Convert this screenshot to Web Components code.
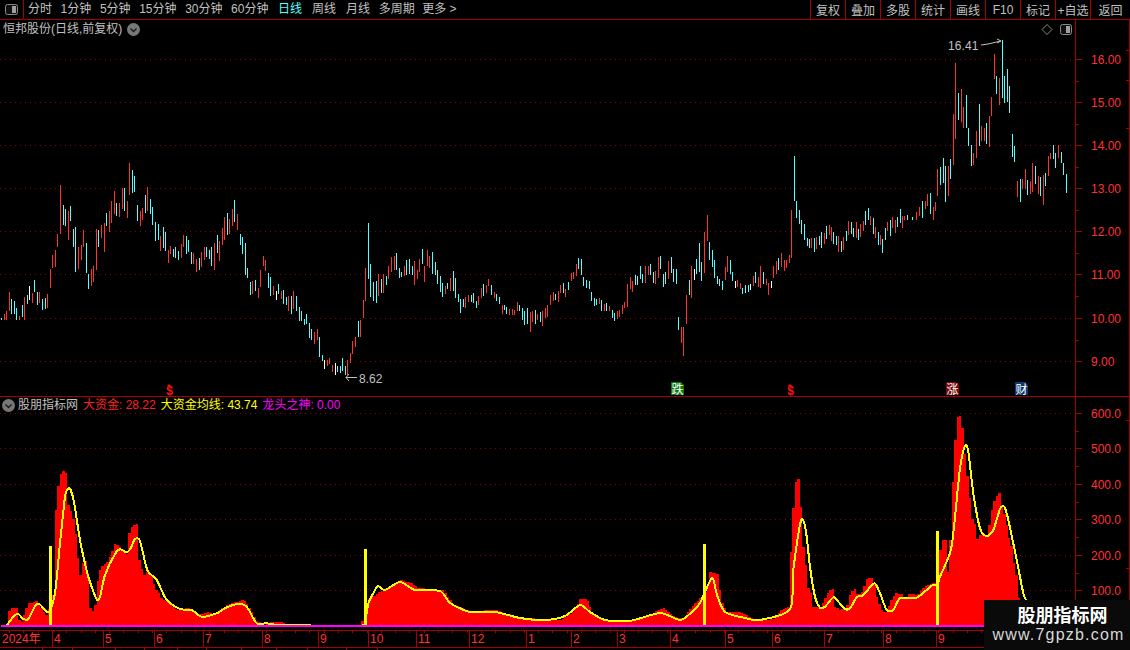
<!DOCTYPE html>
<html lang="zh">
<head>
<meta charset="utf-8">
<title>恒邦股份</title>
<style>
  html, body { margin: 0; background: #000; overflow: hidden; }
  #app {
    position: relative;
    width: 1130px;
    height: 650px;
    overflow: hidden;
    display: flex;
    flex-direction: column;
    font: 12px "Liberation Sans", "Noto Sans CJK SC", sans-serif;
    color: #c0c0c0;
  }
</style>
</head>
<body>
<div id="app">
  <tdx-toolbar>
    <tool-item>分时</tool-item>
    <tool-item>1分钟</tool-item>
    <tool-item>5分钟</tool-item>
    <tool-item>15分钟</tool-item>
    <tool-item>30分钟</tool-item>
    <tool-item>60分钟</tool-item>
    <tool-item active style="margin-left:1px">日线</tool-item>
    <tool-item style="margin-left:1.4px">周线</tool-item>
    <tool-item style="margin-left:1.4px">月线</tool-item>
    <tool-item>多周期</tool-item>
    <tool-item style="margin-left:-1px">更多 &gt;</tool-item>
    <tool-cell slot="right">复权</tool-cell>
    <tool-cell slot="right">叠加</tool-cell>
    <tool-cell slot="right">多股</tool-cell>
    <tool-cell slot="right">统计</tool-cell>
    <tool-cell slot="right">画线</tool-cell>
    <tool-cell slot="right">F10</tool-cell>
    <tool-cell slot="right">标记</tool-cell>
    <tool-cell slot="right">+自选</tool-cell>
    <tool-cell slot="right" last>返回</tool-cell>
  </tdx-toolbar>
  <kline-chart>
    <span>恒邦股份(日线,前复权)</span>
    <signal-tag slot="tags" style="left:166px"></signal-tag>
    <signal-tag slot="tags" style="left:671px" kind="green">跌</signal-tag>
    <signal-tag slot="tags" style="left:787px"></signal-tag>
    <signal-tag slot="tags" style="left:946px" kind="red">涨</signal-tag>
    <signal-tag slot="tags" style="left:1015px" kind="blue">财</signal-tag>
  </kline-chart>
  <indicator-chart>
    <span style="color:#c0c0c0">股朋指标网</span>
    <span style="color:#ff2020">大资金: 28.22</span>
    <span style="color:#ffff00">大资金均线: 43.74</span>
    <span style="color:#ff00ff">龙头之神: 0.00</span>
  </indicator-chart>
  <time-axis></time-axis>
  <tab-strip></tab-strip>
  <water-mark></water-mark>
</div>

<script>
const LINE = '#a80000'
const DOTS = '#8c0000'
const FONT = '"Liberation Sans", "Noto Sans CJK SC", sans-serif'

// bars as read from the crops: colour, x, top, bottom in crop pixels (3x)
const BARS = [
  [0, 150, 'c4,503,510 r12,492,510 r18,483,510 r27,426,483 c33,447,491 c42,453,491 c48,474,510 r57,498,510 c66,465,500 r72,441,510 c81,435,462 w87,408,450 r96,429,459 c102,390,426 c111,426,465 r117,426,459 c126,447,480 c135,444,477 r141,432,474 r150,357,414 r156,315,354 r165,300,351 r171,252,291 r181,105,252 c189,165,225 c195,177,228 r205,183,270 c211,168,213 c220,237,291 c226,231,366 r235,291,357 r243,285,330 r249,240,291 c258,279,370 c265,372,417 r273,357,408 r279,348,396 r289,237,360 c295,240,291 r303,225,264 r312,219,306 c319,189,228 r327,183,246 r333,153,219 r342,123,192 c349,159,198 r357,159,201 r366,114,177 c373,114,183 r381,153,204 r388,39,135 c396,60,129 c403,78,126 c411,165,213 r420,183,228 r426,174,210 c435,135,189 r441,111,183 c450,147,192 c457,171,225 c465,216,273 c474,222,270 r480,258,303 c489,231,294 c495,246,303 r504,300,339 r511,288,312 c519,297,321 c526,291,324 c534,303,330 r543,282,324 r549,255,291 c558,258,312 c564,270,306 c573,306,342 r579,309,342 r589,327,366 c598,324,360 r604,306,351 r612,291,330 c618,291,321 c627,300,327 c634,291,348 r643,279,360 c651,255,309 r657,273,333 r666,234,285 r672,201,270 c681,189,255 r688,207,252 r696,177,228 c702,150,216 r711,192,240 c720,252,285 c726,261,312 c735,279,375 c741,354,384 c751,396,435 r757,393,432 c766,390,423 r775,414,444'],
  [260, 210, 'r1,180,231 r10,138,168 r16,150,183 c25,189,234 c31,201,258 r40,228,255 w49,243,270 c54,222,252 r64,243,267 c70,240,282 c79,261,285 r85,258,303 c94,258,312 r100,243,297 c109,258,303 c118,291,333 c124,303,333 c133,327,345 c139,312,342 c148,339,385 c154,357,390 r163,366,402 r171,357,390 c178,381,441 c186,435,453 w193,450,477 r201,450,468 r208,444,462 r217,465,486 w226,459,495 c232,468,487 c241,468,489 c247,444,483 c256,468,495 r262,450,495 r271,429,459 r277,393,432 r286,381,411 c295,333,381 r301,330,381 r310,270,324 r316,174,273 c325,39,207 c331,162,261 c340,216,273 c349,213,279 r355,192,258 c364,207,249 r370,192,249 c379,198,225 r385,168,207 r394,141,186 r403,138,180 c409,129,180 c418,174,204 c424,186,201 r433,168,198 c439,150,195 c448,147,192 c457,168,195 r463,153,225 r472,180,207 r478,147,186 c487,117,162 r493,168,216 r502,120,168 r508,138,174 c517,126,192 c526,156,195 c532,180,222 c541,198,246 c547,219,261 r556,228,252 c562,219,237 r571,204,243 c579,183,243 c586,204,264 c595,252,276 c601,267,309 c610,267,291 r616,261,294 r625,255,276 c634,255,276 c640,249,279 c649,273,294 r655,258,285 r664,234,264 c670,222,258 r679,225,249 r685,207,228 c694,225,255 r703,246,264 c709,252,273 c718,261,282 r725,285,312 c733,285,300 c739,291,312 r748,297,315 r757,297,315 r763,300,315 r772,276,303 c778,285,303'],
  [520, 150, 'c7,474,510 c13,483,525 c22,474,522 r31,486,546 r37,483,516 c46,480,522 r52,492,510 c61,486,516 r67,483,528 r76,474,504 r82,465,501 r91,435,465 r100,426,453 c106,432,450 r115,423,456 r121,405,429 c130,399,429 r136,417,441 c145,396,420 r154,369,393 r160,366,387 r169,342,378 c175,324,357 c184,327,375 c190,381,408 c199,390,414 c208,393,417 c214,426,453 c223,444,468 c229,447,465 r238,444,462 c244,450,483 r253,462,483 c259,459,483 r268,468,483 c277,480,504 c283,489,513 r292,483,507 r298,480,501 r307,465,492 r313,456,474 r322,402,471 r331,381,417 r337,393,426 c346,375,405 c352,378,405 c361,348,387 c367,372,399 r376,348,399 r385,348,375 c391,342,375 c400,366,399 r406,363,402 r415,321,384 c421,318,357 c430,372,411 c436,366,402 r445,333,387 c454,321,369 c460,357,396 c469,357,402 c475,501,540 r484,531,579 r490,531,618 r499,435,522 c508,390,435 r514,348,444 w523,357,390 c529,327,372 c538,279,366 c544,336,393 r553,246,369 r562,195,273 c568,276,330 c577,300,351 c583,330,384 c592,378,402 c598,387,408 c607,393,420 r616,351,390 r622,318,366 c631,330,372 c637,366,393 w646,393,414 r652,390,411 r661,399,417 c667,414,432 c676,405,429 c685,405,426 w691,402,420 r700,378,408 c706,366,399 r715,381,411 r721,348,414 c730,366,402 r739,387,405 r745,399,435 w754,393,414 r760,348,384 r769,333,372 c775,324,360 r784,309,351 r793,330,363 r799,330,354 r808,315,339 r814,180,324 c823,18,153 c829,153,204 c838,180,222 c844,210,252 c853,222,270 c862,264,288 c868,267,294'],
  [900, 30, 'r13,558,570 c22,555,570 c37,561,570 r49,546,570 r58,531,558 c67,513,564 r76,513,537 r82,492,528 c91,489,552 r100,531,570 r106,516,543 r112,417,498 c121,411,465 c130,384,459 c136,408,516 r145,408,498 c151,387,447 r160,252,405 r166,99,327 c175,189,270 r184,177,276 r190,231,294 c199,195,294 c205,294,348 c214,345,408 r220,369,405 r229,303,384 c238,222,348 r244,288,333 r253,294,333 c259,279,342 r268,258,351 r274,201,258 r283,72,147 c289,138,192 r298,144,225 c307,30,204 c313,138,219 c322,117,216 c328,168,249 c337,312,381 c343,348,396 r352,453,501 c361,447,516 r367,447,477 r376,417,477 c382,450,495 r391,453,492 r397,399,486 c406,408,462 r415,438,492 c421,441,498 r430,435,525 c436,429,468 r445,378,438 r451,369,387 c460,345,387 c466,369,414 r475,345,384 c484,366,399 c490,399,435 c499,432,489']
]

// stretch between the crops, read off the full picture: middle of each bar
const MIDS = [243,245,243,240,240,238,232,230,234,238,240,244,246,243,236,228,228,232,230,234,230,226,218,214,220,226,232,238,240,246,234,226,228,222,226,222,216,222]
const MID_LEN = [10, 14, 12, 9, 16, 11, 13]
const MID_COL = 'rcrccrcrrccrc'

function candlePaths () {
  const paths = { r: '', c: '', w: '' }
  const add = (col, x, top, bottom) => {
    paths[col] += `M${Math.round(x) + 0.5} ${Math.round(top)}V${Math.round(bottom)}`
  }
  for (const [ox, oy, text] of BARS) {
    for (const bar of text.split(' ')) {
      const [x, top, bottom] = bar.slice(1).split(',').map(Number)
      add(bar[0], ox + x / 3, oy + top / 3, oy + bottom / 3)
    }
  }
  MIDS.forEach((mid, i) => {
    const len = MID_LEN[i % MID_LEN.length]
    add(MID_COL[i % MID_COL.length], 811.4 + i * 2.45, mid - len / 2, mid + len / 2)
  })
  return paths
}

const fromCrop = (list, ox, oy) => list.map(([x, y]) => [ox + x / 3, oy + y / 3])

const RED_TOP = [
  ...fromCrop([[3,497],[20,497],[22,460],[30,445],[47,441],[48,475],[55,482],[65,490],[66,475],[75,450],[82,428],[95,428],[105,423],[110,430],[122,445],[132,465],[140,465],[145,430],[155,430],[158,400],[165,140],[175,50],[185,33],[195,40],[200,130],[210,155],[220,190],[230,280],[233,330],[240,350],[243,310],[255,300],[263,360],[268,452],[282,452],[283,400],[290,360],[298,325],[320,305],[335,270],[340,250],[350,255],[365,270],[380,285],[383,225],[393,200],[408,192],[408,280],[420,315],[426,350],[435,335],[450,340],[462,385],[475,400],[480,415],[500,425],[530,452],[560,442],[590,465],[620,457],[640,462],[665,445],[680,433],[715,423]], 0, 460),
  [243,600],[248,607],[255,620],[262,625],[270,622],[280,622],[290,625],[360,626],[362,618],[366,608],[367,600],[377,593],[384,590],
  [400,580],[410,583],[418,588],[442,590],[452,604],[470,611],[495,610],[510,615],[525,618],[560,620],[572,612],[580,598],[586,600],[592,614],[602,620],[632,620],[650,614],[662,608],[672,616],[682,619],[692,606],[700,597],[706,590],[708,572],[717,574],[720,600],[726,612],[740,612],[750,618],
  ...fromCrop([[0,630],[40,628],[60,600],[85,590],[88,455],[97,295],[105,210],[112,207],[115,290],[122,290],[125,400],[135,475],[140,535],[148,535],[150,585],[155,590],[180,590],[190,570],[205,540],[215,537],[218,590],[240,600],[258,590],[265,555],[280,535],[290,555],[305,545],[318,505],[335,505],[343,530],[345,555],[360,600],[375,610],[390,570],[405,550],[425,553],[430,565],[445,550],[470,555],[490,530],[510,520],[525,520],[537,425],[545,390],[555,390],[558,500],[565,450],[573,250],[580,115],[588,20],[598,18],[605,60],[610,120],[625,250],[632,325],[640,330],[645,398],[652,375],[680,375],[695,285],[705,260],[720,243],[722,290],[735,330],[740,375],[750,400],[758,455],[768,505],[770,560],[780,570]], 760, 410),
  [1017,600],[1018,626]
]

const YELLOW = [
  ...fromCrop([[20,497],[40,470],[55,462],[70,477],[85,477],[105,438],[118,432],[140,455],[150,452],[165,400],[180,250],[195,110],[205,85],[212,90],[222,125],[240,240],[265,350],[290,418],[300,410],[315,345],[345,282],[360,268],[380,277],[392,265],[405,237],[420,243],[442,330],[470,360],[500,420],[540,447],[575,450],[605,470],[650,460],[680,442],[715,432]], 0, 460),
  ...fromCrop([[740,50],[770,100],[800,100],[845,105],[1075,107],[1095,95],[1105,40],[1120,10]], 0, 590),
  [378,586],[385,590],[400,582],[415,590],[440,591],[450,603],[470,612],[495,612],[520,618],[545,620],[565,616],[580,605],[590,612],[605,620],[630,621],[660,613],[680,620],[692,612],[700,603],[712,578],[717,595],[725,612],[745,618],[760,620],
  ...fromCrop([[90,598],[100,480],[122,335],[132,337],[140,380],[150,470],[165,560],[180,593],[195,590],[220,562],[235,575],[255,597],[270,595],[290,562],[310,555],[343,520],[360,550],[380,600],[400,600],[420,565],[470,563],[515,527],[532,525],[540,500],[570,430],[580,370],[600,175],[615,107],[625,125],[640,250],[660,355],[680,378],[700,360],[720,297],[733,290],[745,330],[770,450],[790,550],[800,575]], 760, 410),
  [1028,610]
]

function stepArea (points, base) {
  let d = `M${points[0][0]} ${base}`
  let seg = 0
  for (let x = points[0][0]; x < points[points.length - 1][0]; x += 2.45) {
    while (seg < points.length - 2 && points[seg + 1][0] < x) seg++
    const [x0, y0] = points[seg]
    const [x1, y1] = points[seg + 1]
    const y = y0 + (y1 - y0) * (x - x0) / (x1 - x0 || 1)
    d += `V${Math.round(y)}H${Math.round(x + 2.45)}`
  }
  return d + `V${base}Z`
}

// catmull-rom through the read points, the reference line is a smooth average
function smoothLine (p) {
  let d = `M${p[0][0]} ${p[0][1]}`
  for (let i = 0; i < p.length - 1; i++) {
    const a = p[i - 1] || p[i]
    const b = p[i]
    const c = p[i + 1]
    const e = p[i + 2] || c
    const c1 = [b[0] + (c[0] - a[0]) / 8, b[1] + (c[1] - a[1]) / 8]
    const c2 = [c[0] - (e[0] - b[0]) / 8, c[1] - (e[1] - b[1]) / 8]
    d += `C${c1[0].toFixed(1)} ${c1[1].toFixed(1)} ${c2[0].toFixed(1)} ${c2[1].toFixed(1)} ${c[0].toFixed(1)} ${c[1].toFixed(1)}`
  }
  return d
}

// dotted grid, axis ticks and right-hand labels shared by both panels
function gridAndAxis (rows, fromY, toY) {
  let out = ''
  rows.forEach(([y, label], i) => {
    out += `<path d="M0 ${y + 0.5}H1075" stroke="${DOTS}" stroke-dasharray="1 4"/>`
    out += `<path d="M1075 ${y + 0.5}H1082" stroke="${LINE}"/>`
    out += `<text x="1091" y="${y + 4.5}" fill="#ff3232">${label}</text>`
    if (i < rows.length - 1) {
      const half = Math.round((y + rows[i + 1][0]) / 2)
      out += `<path d="M1075 ${half + 0.5}H1079" stroke="${LINE}"/>`
    }
  })
  out += `<path d="M1075.5 ${fromY}V${toY}" stroke="${LINE}"/>`
  return out
}

class TdxToolbar extends HTMLElement {
  constructor () {
    super()
    this.attachShadow({ mode: 'open' }).innerHTML = `
      <style>
        :host { display: flex; height: 19px; border-bottom: 1px solid ${LINE}; flex: none; align-items: stretch; }
        .menu { width: 23px; border-right: 1px solid ${LINE}; display: flex; align-items: center; justify-content: center; flex: none; }
        .items { display: flex; gap: 8.6px; padding-left: 4px; align-items: center; }
        .right { margin-left: auto; display: flex; }
      </style>
      <div class="menu">
        <svg width="13" height="11" viewBox="0 0 13 11">
          <rect x="0.5" y="0.5" width="12" height="10" rx="2" fill="#111" stroke="#8a8a8a"/>
          <rect x="7" y="2" width="4" height="7" fill="#a0a0a0"/>
        </svg>
      </div>
      <div class="items"><slot></slot></div>
      <div class="right"><slot name="right"></slot></div>`
  }
}
window.customElements.define('tdx-toolbar', TdxToolbar)

class ToolItem extends HTMLElement {
  constructor () {
    super()
    this.attachShadow({ mode: 'open' }).innerHTML = `
      <style>
        :host { display: block; color: #c0c0c0; white-space: nowrap; line-height: 19px; }
        :host([active]) { color: #54ffff; }
      </style>
      <slot></slot>`
  }
}
window.customElements.define('tool-item', ToolItem)

class ToolCell extends HTMLElement {
  constructor () {
    super()
    this.attachShadow({ mode: 'open' }).innerHTML = `
      <style>
        :host {
          display: flex; box-sizing: border-box; width: 35px; border-left: 1px solid ${LINE};
          align-items: center; justify-content: center; color: #c0c0c0; white-space: nowrap;
        }
        :host([last]) { width: 40px; }
      </style>
      <slot></slot>`
  }
}
window.customElements.define('tool-cell', ToolCell)

class SignalTag extends HTMLElement {
  constructor () {
    super()
    this.attachShadow({ mode: 'open' }).innerHTML = `
      <style>
        :host {
          position: absolute; top: 362px; width: 13px; height: 13px; color: #fff;
          font: 12px/13px "Noto Sans CJK SC", sans-serif; text-align: center;
          clip-path: polygon(0 0, 10px 0, 13px 3px, 13px 13px, 0 13px);
        }
        :host([kind="green"]) { background: #0a7a0a; }
        :host([kind="red"]) { background: #7a0808; }
        :host([kind="blue"]) { background: #0d3a6e; }
        :host(:not([kind])) { clip-path: none; }
        .arrow { width: 0; height: 0; margin: 2px 0 0 1px; border: 2.5px solid transparent; border-top: 0; border-bottom: 2px solid #ff1010; }
        .dollar { display: block; color: #ff1010; font: bold 12px/10px "Liberation Sans", sans-serif; width: 7px; }
      </style>
      ${this.hasAttribute('kind') ? '<slot></slot>' : '<div class="arrow"></div><span class="dollar">$</span>'}`
  }
}
window.customElements.define('signal-tag', SignalTag)

class KlineChart extends HTMLElement {
  constructor () {
    super()
    const rows = [59, 102, 145, 188, 231, 274, 318, 361].map((y, i) => [y, (16 - i).toFixed(2)])
    const bars = candlePaths()
    this.attachShadow({ mode: 'open' }).innerHTML = `
      <style>
        :host { display: block; position: relative; height: 377px; flex: none; }
        svg { display: block; font: 12px ${FONT}; shape-rendering: crispEdges; }
        .title { position: absolute; left: 3px; top: 2px; display: flex; align-items: center; gap: 5px; line-height: 15px; color: #c0c0c0; }
        .icons { position: absolute; left: 1041px; top: 4px; }
      </style>
      <svg width="1130" height="377" viewBox="0 20 1130 377" fill="none">
        ${gridAndAxis(rows, 20, 397)}
        <path d="M1129.5 20V397M1126 50H1129M1126 80H1129M1126 128H1129" stroke="${LINE}"/>
        <path d="${bars.r}" stroke="#ff3232"/>
        <path d="${bars.c}" stroke="#54ffff"/>
        <path d="${bars.w}" stroke="#ffffff"/>
        <text x="948" y="49.5" fill="#c0c0c0" style="letter-spacing:.1px">16.41</text>
        <path d="M981 45L988 44L1001 41M997 39L1001 41L997 43" stroke="#c0c0c0" style="shape-rendering:auto"/>
        <text x="359" y="383" fill="#c0c0c0">8.62</text>
        <path d="M357 377.5H346M349 374L346 377.5L349 381" stroke="#c0c0c0" style="shape-rendering:auto"/>
        <path d="M0 396.5H1130" stroke="${LINE}"/>
      </svg>
      <div class="title">
        <slot></slot>
        <svg width="13" height="13" viewBox="0 0 13 13" style="shape-rendering:auto">
          <circle cx="6.5" cy="6.5" r="6.5" fill="#777"/>
          <path d="M3.5 5.5L6.5 8.5L9.5 5.5" fill="none" stroke="#1a1a1a" stroke-width="1.4"/>
        </svg>
      </div>
      <svg class="icons" width="32" height="12" viewBox="0 0 32 12" style="shape-rendering:auto">
        <path d="M6 .5L11 5.5L6 10.5L1 5.5Z" fill="none" stroke="#8a8a8a"/>
        <rect x="19.5" y="0.5" width="11" height="10" rx="2" fill="#111" stroke="#8a8a8a"/>
        <rect x="25" y="2" width="4" height="7" fill="#a0a0a0"/>
      </svg>
      <slot name="tags"></slot>`
  }
}
window.customElements.define('kline-chart', KlineChart)

class IndicatorChart extends HTMLElement {
  constructor () {
    super()
    const rows = [[413, '600.0'], [448, '500.0'], [484, '400.0'], [519, '300.0'], [555, '200.0'], [590, '100.0']]
    const spikes = [[50, 546], [365, 549], [704, 544], [937, 531]]
      .map(([x, y]) => `<rect x="${x - 1}" y="${y}" width="3" height="${627 - y}" fill="#ffff00"/>`).join('')
    this.attachShadow({ mode: 'open' }).innerHTML = `
      <style>
        :host { display: block; position: relative; height: 233px; flex: none; }
        svg { display: block; font: 12px ${FONT}; shape-rendering: crispEdges; }
        .legend { position: absolute; left: 2px; top: 1px; display: flex; align-items: center; line-height: 15px; white-space: nowrap; }
        .legend svg { margin-right: 3px; shape-rendering: auto; }
        ::slotted(span) { margin-right: 5px; }
      </style>
      <svg width="1130" height="233" viewBox="0 397 1130 233" fill="none">
        ${gridAndAxis(rows, 397, 630)}
        <path d="M1129.5 397V630M1126 420H1129M1126 568H1129" stroke="${LINE}"/>
        <path d="${stepArea(RED_TOP, 626)}" fill="#ff0000"/>
        <path d="${smoothLine(YELLOW)}" stroke="#ffff00" stroke-width="2" stroke-linejoin="round"/>
        ${spikes}
        <rect x="1" y="625" width="1074" height="2" fill="#ff00ff"/>
      </svg>
      <div class="legend">
        <svg width="13" height="13" viewBox="0 0 13 13">
          <circle cx="6.5" cy="6.5" r="6.5" fill="#777"/>
          <path d="M3.5 5.5L6.5 8.5L9.5 5.5" fill="none" stroke="#1a1a1a" stroke-width="1.4"/>
        </svg>
        <slot></slot>
      </div>`
  }
}
window.customElements.define('indicator-chart', IndicatorChart)

class TimeAxis extends HTMLElement {
  constructor () {
    super()
    const months = [[52, 4], [103, 5], [154, 6], [203, 7], [262, 8], [318, 9], [368, 10], [416, 11], [469, 12], [526, 1], [571, 2], [617, 3], [670, 4], [725, 5], [772, 6], [824, 7], [883, 8], [936, 9]]
    let ticks = ''
    for (let x = 9; x < 1075; x += 14.3) ticks += `M${Math.round(x) + 0.5} 630V633`
    const marks = months.map(([x, m]) => `
      <path d="M${x + 0.5} 630V647" stroke="${LINE}"/>
      <text x="${x + 2}" y="643" fill="#ff3232">${m}</text>`).join('')
    this.attachShadow({ mode: 'open' }).innerHTML = `
      <style>
        :host { display: block; height: 17px; flex: none; }
        svg { display: block; font: 12px ${FONT}; shape-rendering: crispEdges; }
      </style>
      <svg width="1130" height="17" viewBox="0 630 1130 17" fill="none">
        <path d="M0 630.5H1130" stroke="${LINE}"/>
        <path d="${ticks}" stroke="${LINE}"/>
        <text x="2" y="643" fill="#ff3232">2024年</text>
        ${marks}
      </svg>`
  }
}
window.customElements.define('time-axis', TimeAxis)

class TabStrip extends HTMLElement {
  constructor () {
    super()
    const widths = [43, 30, 43, 29, 33, 29, 35, 35, 31, 39, 31]
    this.attachShadow({ mode: 'open' }).innerHTML = `
      <style>
        :host { display: flex; height: 3px; flex: none; border-top: 1px solid ${LINE}; box-sizing: border-box; }
        div { box-sizing: border-box; border-right: 1px solid ${LINE}; }
      </style>
      ${widths.map(w => `<div style="width:${w}px"></div>`).join('')}`
  }
}
window.customElements.define('tab-strip', TabStrip)

class WaterMark extends HTMLElement {
  constructor () {
    super()
    this.attachShadow({ mode: 'open' }).innerHTML = `
      <style>
        :host {
          position: absolute; left: 984px; top: 600px; width: 146px; height: 50px; background: #0a0a0a;
          display: flex; flex-direction: column; align-items: center;
        }
        .name { font: bold 18px/22px "Noto Sans CJK SC", sans-serif; color: #fff; margin: 3px 0 0 11px; }
        .site { font: 16px/20px "Liberation Sans", sans-serif; letter-spacing: 1.2px; color: #d8d8d8; margin-left: 3px; }
      </style>
      <div class="name">股朋指标网</div>
      <div class="site">www.7gpzb.com</div>`
  }
}
window.customElements.define('water-mark', WaterMark)
</script>
</body>
</html>
